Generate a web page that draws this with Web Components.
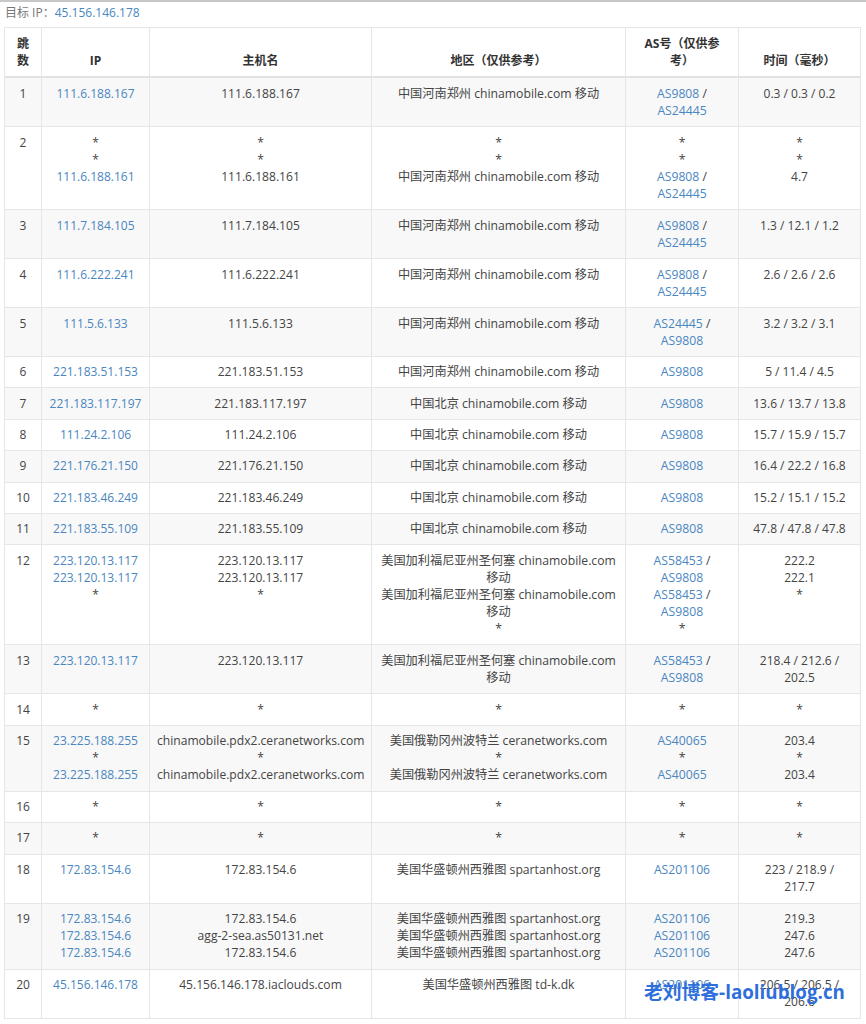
<!DOCTYPE html>
<html lang="zh">
<head>
<meta charset="utf-8">
<title>目标 IP</title>
<style>
  html, body { margin: 0; background: #fff; }
  body { font-family: "Open Sans", "Noto Sans CJK SC", sans-serif; }
</style>
</head>
<body>
<trace-page target="45.156.146.178"></trace-page>

<script>
// ── Hop data: each cell is a list of lines ─────────────────────
const ZZ = '中国河南郑州 chinamobile.com 移动';
const BJ = '中国北京 chinamobile.com 移动';
const SJ = '美国加利福尼亚州圣何塞 chinamobile.com 移动';
const PDX = '美国俄勒冈州波特兰 ceranetworks.com';
const SEA = '美国华盛顿州西雅图 spartanhost.org';
const AS_CM = ['AS9808 /', 'AS24445'];
const one = (n, ip, region, as, time) => ({ n, ip: [ip], host: [ip], region: [region], as, time: [time] });
const star = n => ({ n, ip: ['*'], host: ['*'], region: ['*'], as: ['*'], time: ['*'] });

// Hops whose row holds one line only
const SINGLE_LINE = [6, 7, 8, 9, 10, 11, 14, 16, 17];

const HOPS = [
  one(1, '111.6.188.167', ZZ, AS_CM, '0.3 / 0.3 / 0.2'),
  { n: 2, ip: ['*', '*', '111.6.188.161'], host: ['*', '*', '111.6.188.161'], region: ['*', '*', ZZ],
    as: ['*', '*', ...AS_CM], time: ['*', '*', '4.7'] },
  one(3, '111.7.184.105', ZZ, AS_CM, '1.3 / 12.1 / 1.2'),
  one(4, '111.6.222.241', ZZ, AS_CM, '2.6 / 2.6 / 2.6'),
  one(5, '111.5.6.133', ZZ, ['AS24445 /', 'AS9808'], '3.2 / 3.2 / 3.1'),
  one(6, '221.183.51.153', ZZ, ['AS9808'], '5 / 11.4 / 4.5'),
  one(7, '221.183.117.197', BJ, ['AS9808'], '13.6 / 13.7 / 13.8'),
  one(8, '111.24.2.106', BJ, ['AS9808'], '15.7 / 15.9 / 15.7'),
  one(9, '221.176.21.150', BJ, ['AS9808'], '16.4 / 22.2 / 16.8'),
  one(10, '221.183.46.249', BJ, ['AS9808'], '15.2 / 15.1 / 15.2'),
  one(11, '221.183.55.109', BJ, ['AS9808'], '47.8 / 47.8 / 47.8'),
  { n: 12, ip: ['223.120.13.117', '223.120.13.117', '*'], host: ['223.120.13.117', '223.120.13.117', '*'],
    region: [SJ, SJ, '*'], as: ['AS58453 /', 'AS9808', 'AS58453 /', 'AS9808', '*'], time: ['222.2', '222.1', '*'] },
  one(13, '223.120.13.117', SJ, ['AS58453 /', 'AS9808'], '218.4 / 212.6 / 202.5'),
  star(14),
  { n: 15, ip: ['23.225.188.255', '*', '23.225.188.255'],
    host: ['chinamobile.pdx2.ceranetworks.com', '*', 'chinamobile.pdx2.ceranetworks.com'],
    region: [PDX, '*', PDX], as: ['AS40065', '*', 'AS40065'], time: ['203.4', '*', '203.4'] },
  star(16),
  star(17),
  one(18, '172.83.154.6', SEA, ['AS201106'], '223 / 218.9 / 217.7'),
  { n: 19, ip: ['172.83.154.6', '172.83.154.6', '172.83.154.6'], host: ['172.83.154.6', 'agg-2-sea.as50131.net', '172.83.154.6'],
    region: [SEA, SEA, SEA], as: ['AS201106', 'AS201106', 'AS201106'], time: ['219.3', '247.6', '247.6'] },
  { n: 20, ip: ['45.156.146.178'], host: ['45.156.146.178.iaclouds.com'], region: ['美国华盛顿州西雅图 td-k.dk'],
    as: ['AS201106'], time: ['206.5 / 206.5 / 206.6'] },
];

// ── Table of hops ──────────────────────────────────────────────
class TraceTable extends HTMLElement {
  constructor() {
    super();
    this.attachShadow({ mode: 'open' });
  }

  connectedCallback() {
    const link = s => s === '*' ? s : `<a>${s}</a>`;
    const asLine = s => s === '*' ? s : s.replace(/(AS\d+)/, '<a>$1</a>');
    const lines = (list, fn) => list.map(s => `<div>${fn ? fn(s) : s}</div>`).join('');

    const rows = HOPS.map(h => `
      <tr class="${SINGLE_LINE.includes(h.n) ? 'single' : ''}">
        <td>${h.n}</td>
        <td>${lines(h.ip, link)}</td>
        <td>${lines(h.host)}</td>
        <td>${lines(h.region)}</td>
        <td>${lines(h.as, asLine)}</td>
        <td>${lines(h.time)}</td>
      </tr>`).join('');

    this.shadowRoot.innerHTML = `
      <style>
        :host { display: block; }
        table {
          border-collapse: collapse; table-layout: fixed; width: 856px;
          font-size: 12px; line-height: 17px; color: #444;
        }
        th, td {
          border: 1px solid #e6e6e6; padding: 6.5px 7px 7.5px;
          text-align: center; vertical-align: top;
        }
        th { vertical-align: bottom; font-weight: 700; color: #333; border-bottom-width: 2px; border-bottom-color: #e2e2e2; }
        th:nth-child(5) { padding-left: 13px; padding-right: 13px; }
        tr.single td { padding-top: 6.3px; padding-bottom: 7.1px; }
        td:nth-child(3) { font-size: 12.1px; }
        td:nth-child(4), td:nth-child(5) { font-size: 12.2px; }
        td:nth-child(6) { padding-left: 10px; padding-right: 10px; }
        tbody tr:nth-child(odd) td { background: #f8f8f8; }
        a { color: #4a86bf; text-decoration: none; }
      </style>
      <table>
        <colgroup>
          <col style="width:37px"><col style="width:108px"><col style="width:222px">
          <col style="width:254px"><col style="width:113px"><col style="width:122px">
        </colgroup>
        <thead>
          <tr>
            <th>跳数</th><th>IP</th><th>主机名</th><th>地区（仅供参考）</th><th>AS号（仅供参考）</th><th>时间（毫秒）</th>
          </tr>
        </thead>
        <tbody>${rows}</tbody>
      </table>
    `;
  }
}
customElements.define('trace-table', TraceTable);

// ── Blog watermark, sits over the last row ─────────────────────
class BlogMark extends HTMLElement {
  constructor() {
    super();
    this.attachShadow({ mode: 'open' });
    this.shadowRoot.innerHTML = `
      <style>
        :host {
          position: absolute; left: 644px; top: 979px;
          font-size: 18.8px; line-height: 26px; font-weight: 700; white-space: nowrap;
          color: #2f6fdc;
        }
      </style>
      <slot></slot>
    `;
  }
}
customElements.define('blog-mark', BlogMark);

// ── Page shell ─────────────────────────────────────────────────
class TracePage extends HTMLElement {
  constructor() {
    super();
    this.attachShadow({ mode: 'open' });
  }

  connectedCallback() {
    const target = this.getAttribute('target');
    this.shadowRoot.innerHTML = `
      <style>
        :host { display: block; position: relative; height: 1024px; overflow: hidden; }
        .topline { height: 2px; background: #c8c8c8; }
        .target {
          height: 25px; padding-left: 5px; box-sizing: border-box;
          font-size: 12px; line-height: 22px; color: #777;
        }
        .target a { color: #4a86bf; }
        .wrap { padding-left: 4px; }
      </style>
      <div class="topline"></div>
      <div class="target">目标 IP：<a>${target}</a></div>
      <div class="wrap"><trace-table></trace-table></div>
      <blog-mark>老刘博客-laoliublog.cn</blog-mark>
    `;
  }
}
customElements.define('trace-page', TracePage);
</script>
</body>
</html>
